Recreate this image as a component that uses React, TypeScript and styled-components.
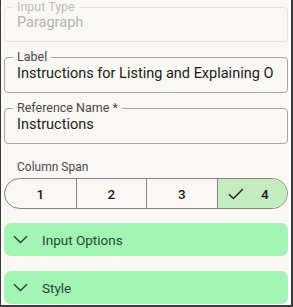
import styled, { createGlobalStyle } from 'styled-components';

const GlobalStyle = createGlobalStyle`
  html, body {
    margin: 0;
    padding: 0;
    background: #f9f8f4;
  }
  body {
    font-family: Roboto, 'Liberation Sans', sans-serif;
  }
`;

interface FieldProps {
  label: string;
  value: string;
  disabled?: boolean;
}

function Field({ label, value, disabled = false }: FieldProps) {
  return (
    <FieldBox $disabled={disabled}>
      <FloatingLabel $disabled={disabled}>{label}</FloatingLabel>
      <Value $disabled={disabled}>{value}</Value>
    </FieldBox>
  );
}

function CheckIcon() {
  return (
    <svg width='16' height='12' viewBox='0 0 16 12' fill='none'>
      <path d='M1 6.2 L5.4 10.5 L15 1' stroke='#1d1b17' strokeWidth='1.3' />
    </svg>
  );
}

function ChevronIcon() {
  return (
    <svg width='15' height='9' viewBox='0 0 15 9' fill='none'>
      <path d='M1 1.2 L7.5 7.6 L14 1.2' stroke='#1e4a2b' strokeWidth='1.4' />
    </svg>
  );
}

const spans = [1, 2, 3, 4];
const selectedSpan = 4;

export default function App() {
  return (
    <>
      <GlobalStyle />
      <Panel>
        <Field label='Input Type' value='Paragraph' disabled />
        <Field label='Label' value='Instructions for Listing and Explaining O' />
        <Field label='Reference Name *' value='Instructions' />

        <SpanSection>
          <SpanLabel>Column Span</SpanLabel>
          <SegmentGroup>
            {spans.map((n) => (
              <Segment key={n} $selected={n === selectedSpan}>
                {n === selectedSpan && <CheckIcon />}
                <span>{n}</span>
              </Segment>
            ))}
          </SegmentGroup>
        </SpanSection>

        <Accordion>
          <ChevronIcon />
          <AccordionTitle>Input Options</AccordionTitle>
        </Accordion>
        <Accordion>
          <ChevronIcon />
          <AccordionTitle>Style</AccordionTitle>
        </Accordion>
      </Panel>
    </>
  );
}

const Panel = styled.div`
  box-sizing: border-box;
  width: 293px;
  height: 307px;
  overflow: hidden;
  background: #f9f8f4;
  border-left: 1px solid #3a3a3a;
  border-right: 2px solid #3a3a3a;
  border-bottom: 2px solid #3a3a3a;
  padding: 7px 3px 0;
  display: flex;
  flex-direction: column;
`;

const FieldBox = styled.div<{ $disabled: boolean }>`
  position: relative;
  box-sizing: border-box;
  height: 36px;
  margin-bottom: 15px;
  padding: 6px 12px 0;
  border: 1px solid ${({ $disabled }) => ($disabled ? '#e6e4df' : '#a9a7a1')};
  border-radius: 4px;
  &:first-child {
    height: 35px;
    padding-top: 5px;
  }
`;

const FloatingLabel = styled.span<{ $disabled: boolean }>`
  position: absolute;
  top: -8px;
  left: 8px;
  padding: 0 4px;
  background: #f9f8f4;
  font-size: 12.5px;
  line-height: 14px;
  white-space: nowrap;
  color: ${({ $disabled }) => ($disabled ? '#bdbbb5' : '#49474a')};
`;

const Value = styled.div<{ $disabled: boolean }>`
  font-size: 14.5px;
  line-height: 20px;
  color: ${({ $disabled }) => ($disabled ? '#b4b2ac' : '#1d1b17')};
  white-space: nowrap;
  overflow: hidden;
`;

const SpanSection = styled.div`
  display: flex;
  flex-direction: column;
`;

const SpanLabel = styled.div`
  padding-left: 13px;
  font-size: 12px;
  line-height: 16px;
  color: #49474a;
  margin-bottom: 3px;
`;

const SegmentGroup = styled.div`
  box-sizing: border-box;
  height: 31px;
  display: grid;
  grid-template-columns: repeat(4, 1fr);
  border: 1px solid #85837c;
  border-radius: 16px;
  overflow: hidden;
`;

const Segment = styled.div<{ $selected: boolean }>`
  display: flex;
  align-items: center;
  justify-content: center;
  gap: 17px;
  font-size: 13.5px;
  font-weight: 500;
  color: #1d1b17;
  background: ${({ $selected }) => ($selected ? '#c5ecc0' : 'transparent')};
  & + & {
    border-left: 1px solid #85837c;
  }
  svg {
    margin-left: -8px;
  }
`;

const Accordion = styled.div`
  box-sizing: border-box;
  height: 33px;
  margin-top: 14px;
  background: #a2f5b5;
  border-radius: 7px;
  display: flex;
  align-items: center;
  padding-left: 9px;
  gap: 14px;
  & + & {
    margin-top: 15px;
  }
`;

const AccordionTitle = styled.span`
  font-size: 13.5px;
  color: #1e4a2b;
`;
